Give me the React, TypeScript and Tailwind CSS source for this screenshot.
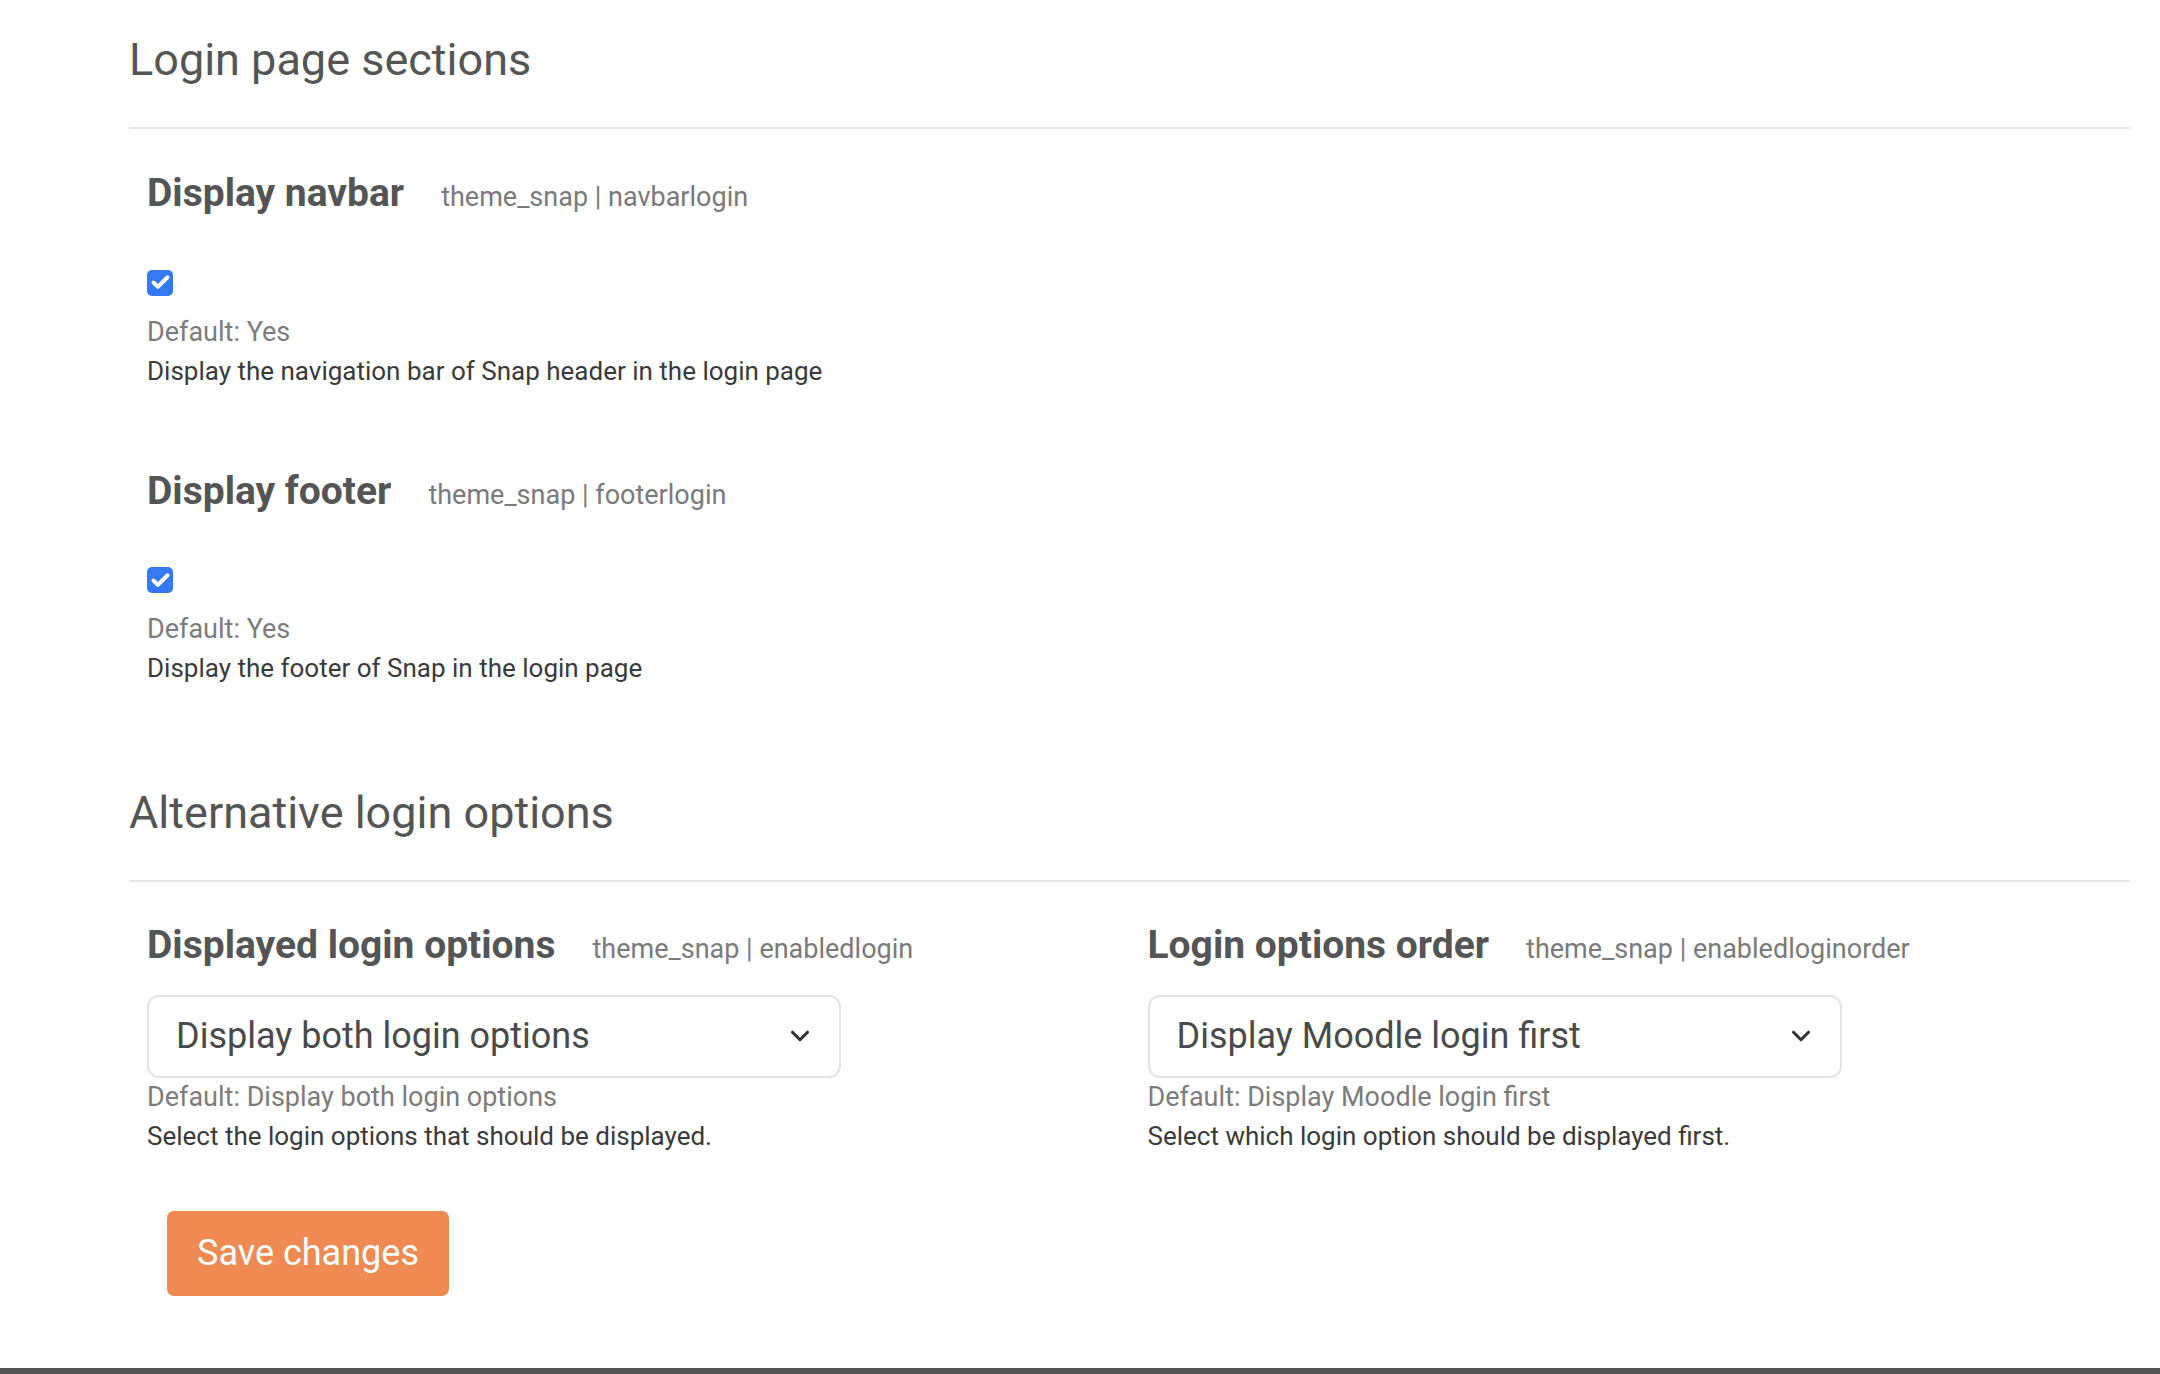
import { Check, ChevronDown } from "lucide-react";

interface CheckSetting {
  title: string;
  code: string;
  defaultText: string;
  description: string;
}

interface SelectSetting {
  title: string;
  code: string;
  value: string;
  description: string;
}

const loginSections: CheckSetting[] = [
  {
    title: "Display navbar",
    code: "theme_snap | navbarlogin",
    defaultText: "Default: Yes",
    description: "Display the navigation bar of Snap header in the login page",
  },
  {
    title: "Display footer",
    code: "theme_snap | footerlogin",
    defaultText: "Default: Yes",
    description: "Display the footer of Snap in the login page",
  },
];

const loginOptions: SelectSetting[] = [
  {
    title: "Displayed login options",
    code: "theme_snap | enabledlogin",
    value: "Display both login options",
    description: "Select the login options that should be displayed.",
  },
  {
    title: "Login options order",
    code: "theme_snap | enabledloginorder",
    value: "Display Moodle login first",
    description: "Select which login option should be displayed first.",
  },
];

function SectionHeading({ children }: { children: string }) {
  return (
    <h3 className="border-b-2 border-[#e6e6e6] pb-[40px] text-[45px] leading-[54px] font-normal text-[#555555]">
      {children}
    </h3>
  );
}

function SettingTitle({ title, code }: { title: string; code: string }) {
  return (
    <div className="flex items-baseline gap-[37px]">
      <h4 className="text-[39px] leading-[46px] font-bold text-[#555555]">{title}</h4>
      <span className="text-[27px] text-[#7a7a7a]">{code}</span>
    </div>
  );
}

function CheckboxSetting({ s }: { s: CheckSetting }) {
  return (
    <div className="px-[18px]">
      <SettingTitle title={s.title} code={s.code} />
      <div className="mt-[52px] flex h-[26px] w-[26px] items-center justify-center rounded-[5px] bg-[#3478f6]">
        <Check className="h-[21px] w-[21px] text-white" strokeWidth={4.5} />
      </div>
      <div className="mt-[17px] leading-[39px]">
        <p className="text-[27px] text-[#7c7c7c]">{s.defaultText}</p>
        <p className="text-[26px] text-[#3a3a3a]">{s.description}</p>
      </div>
    </div>
  );
}

function SelectBox({ s }: { s: SelectSetting }) {
  return (
    <div className="px-[18px]">
      <SettingTitle title={s.title} code={s.code} />
      <div className="mt-[25px] flex h-[83px] w-[694px] items-center justify-between rounded-[12px] border-2 border-[#e2e4e8] bg-white pl-[27px] pr-[24px]">
        <span className="text-[36px] text-[#4a4a4a]">{s.value}</span>
        <ChevronDown className="h-[30px] w-[30px] text-[#333333]" strokeWidth={2.5} />
      </div>
      <div className="leading-[39px]">
        <p className="text-[27px] text-[#7c7c7c]">Default: {s.value}</p>
        <p className="text-[26px] text-[#3a3a3a]">{s.description}</p>
      </div>
    </div>
  );
}

export default function App() {
  return (
    <div
      className="flex h-[1374px] w-full flex-col bg-white"
      style={{ fontFamily: "Roboto, 'Liberation Sans', sans-serif" }}
    >
      <div className="flex-1 pl-[129px] pr-[30px]">
        <div className="pt-[33px]">
          <SectionHeading>Login page sections</SectionHeading>
        </div>

        <div className="mt-[41px] flex flex-col gap-[77px]">
          {loginSections.map((s) => (
            <CheckboxSetting key={s.code} s={s} />
          ))}
        </div>

        <div className="mt-[98px]">
          <SectionHeading>Alternative login options</SectionHeading>
        </div>

        <div className="mt-[40px] grid grid-cols-2">
          {loginOptions.map((s) => (
            <SelectBox key={s.code} s={s} />
          ))}
        </div>

        <div className="mt-[55px] pl-[38px]">
          <button className="flex h-[85px] w-[282px] items-center justify-center rounded-[7px] bg-[#ef8a52] text-[36px] text-white">
            Save changes
          </button>
        </div>
      </div>
      <div className="h-[6px] bg-[#555555]" />
    </div>
  );
}
